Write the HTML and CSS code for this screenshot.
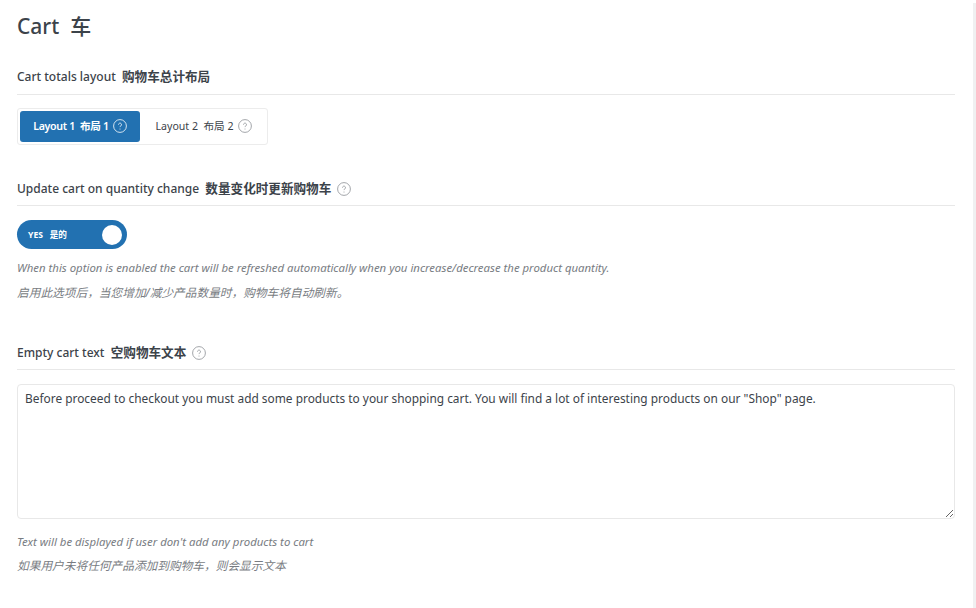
FILE: index.html
```html
<!DOCTYPE html>
<html lang="en">
<head>
<meta charset="utf-8">
<title>Cart</title>
<link rel="stylesheet" href="styles.css">
</head>
<body>
<div class="page">
  <main class="panel">
    <h1 class="title">Cart&nbsp; 车</h1>

    <section class="section section-layout">
      <h2 class="heading">Cart totals layout&nbsp; <b>购物车总计布局</b></h2>
      <div class="segmented">
        <div class="seg seg-active"><span class="seg-text">Layout 1&nbsp; 布局 1</span>
          <svg class="help" viewBox="0 0 14 14"><circle cx="7" cy="7" r="6.4"/><path d="M5.5 5.6a1.5 1.5 0 1 1 2.3 1.3c-.5.3-.8.6-.8 1.2"/><path d="M7 9.6v.9"/></svg>
        </div>
        <div class="seg"><span class="seg-text">Layout 2&nbsp; 布局 2</span>
          <svg class="help" viewBox="0 0 14 14"><circle cx="7" cy="7" r="6.4"/><path d="M5.5 5.6a1.5 1.5 0 1 1 2.3 1.3c-.5.3-.8.6-.8 1.2"/><path d="M7 9.6v.9"/></svg>
        </div>
      </div>
    </section>

    <section class="section section-update">
      <h2 class="heading heading-compact"><span>Update cart on quantity change&nbsp; </span><b>数量变化时更新购物车</b>
        <svg class="help" viewBox="0 0 14 14"><circle cx="7" cy="7" r="6.4"/><path d="M5.5 5.6a1.5 1.5 0 1 1 2.3 1.3c-.5.3-.8.6-.8 1.2"/><path d="M7 9.6v.9"/></svg>
      </h2>
      <div class="toggle"><span class="toggle-label">YES&nbsp;&nbsp; 是的</span><span class="knob"></span></div>
      <p class="note">When this option is enabled the cart will be refreshed automatically when you increase/decrease the product quantity.</p>
      <p class="note note-cjk">启用此选项后，当您增加/减少产品数量时，购物车将自动刷新。</p>
    </section>

    <section class="section section-empty">
      <h2 class="heading heading-compact"><span>Empty cart text&nbsp; </span><b>空购物车文本</b>
        <svg class="help" viewBox="0 0 14 14"><circle cx="7" cy="7" r="6.4"/><path d="M5.5 5.6a1.5 1.5 0 1 1 2.3 1.3c-.5.3-.8.6-.8 1.2"/><path d="M7 9.6v.9"/></svg>
      </h2>
      <textarea class="text-input">Before proceed to checkout you must add some products to your shopping cart. You will find a lot of interesting products on our "Shop" page.</textarea>
      <p class="note note-first">Text will be displayed if user don't add any products to cart</p>
      <p class="note note-cjk note-tight">如果用户未将任何产品添加到购物车，则会显示文本</p>
    </section>
  </main>
  <div class="scrollstrip"></div>
</div>
</body>
</html>
```

FILE: styles.css
```css
* { box-sizing: border-box; }
html, body { margin: 0; height: 100%; background: #fff; overflow: hidden; }
body {
  font-family: "Noto Sans", "Noto Sans CJK SC", sans-serif;
  color: #3c434a;
}
.page { display: flex; height: 608px; }
.panel { width: 955px; padding-left: 17px; flex: none; }
.scrollstrip {
  width: 3px;
  margin: 3px 0 0 18px;
  background: #f0f0f1;
  flex: none;
}
.title {
  margin: 0;
  padding-top: 11px;
  font-size: 21px;
  line-height: 30px;
  font-weight: 500;
  color: #3c434a;
}
.section-layout { margin-top: 27px; }
.section-update { margin-top: 35px; }
.section-empty { margin-top: 39px; }
.heading {
  display: flex;
  align-items: center;
  margin: 0;
  height: 27px;
  border-bottom: 1px solid #e8e8e8;
  padding-bottom: 9px;
  font-size: 12px;
  line-height: 17px;
  font-weight: 500;
  white-space: pre;
}
.heading-compact { height: 26px; padding-bottom: 8px; }
.heading b { font-weight: 700; font-size: 12.6px; }
.heading .help { margin-left: 6px; color: #8c8f94; }
.help {
  width: 14px;
  height: 14px;
  flex: none;
  fill: none;
  stroke: currentColor;
  stroke-width: 0.8;
  margin-left: 4px;
}
.segmented {
  display: inline-flex;
  margin-top: 13px;
  padding: 2px;
  height: 37px;
  width: 251px;
  border: 1px solid #ececec;
  border-radius: 3px;
}
.seg {
  display: flex;
  align-items: center;
  justify-content: center;
  height: 31px;
  padding-left: 2px;
  padding-bottom: 1px;
  font-size: 10.6px;
  flex: 1;
  color: #3c434a;
}
.seg-text { white-space: nowrap; margin-bottom: 2px; }
.seg .help { color: #8c8f94; }
.seg-active {
  flex: none;
  width: 120px;
  padding-left: 0;
  background: #2271b1;
  color: #fff;
  font-weight: 600;
  letter-spacing: -0.3px;
  border-radius: 3px;
}
.seg-active .help { color: #fff; }
.toggle {
  display: flex;
  align-items: center;
  justify-content: space-between;
  width: 110px;
  height: 29px;
  margin-top: 14px;
  padding: 0 5px 0 11px;
  border-radius: 15px;
  background: #2271b1;
  color: #fff;
}
.toggle-label { font-size: 8.6px; font-weight: 700; white-space: nowrap; padding-bottom: 1px; }
.knob { width: 20px; height: 20px; border-radius: 50%; background: #fff; }
.note {
  margin: 0;
  font-size: 11.38px;
  line-height: 25px;
  font-style: italic;
  color: #787c82;
}
.note-cjk { font-size: 11.7px; }
.note-tight { line-height: 23px; }
.toggle + .note { margin-top: 6px; }
.text-input {
  display: block;
  width: 938px;
  height: 135px;
  margin-top: 14px;
  padding: 4px 7px;
  border: 1px solid #e8e8e8;
  border-radius: 4px;
  font: 11.9px/18px "Noto Sans", "Noto Sans CJK SC", sans-serif;
  color: #3c434a;
  outline: none;
}
.note-first { margin-top: 10px; }
```
